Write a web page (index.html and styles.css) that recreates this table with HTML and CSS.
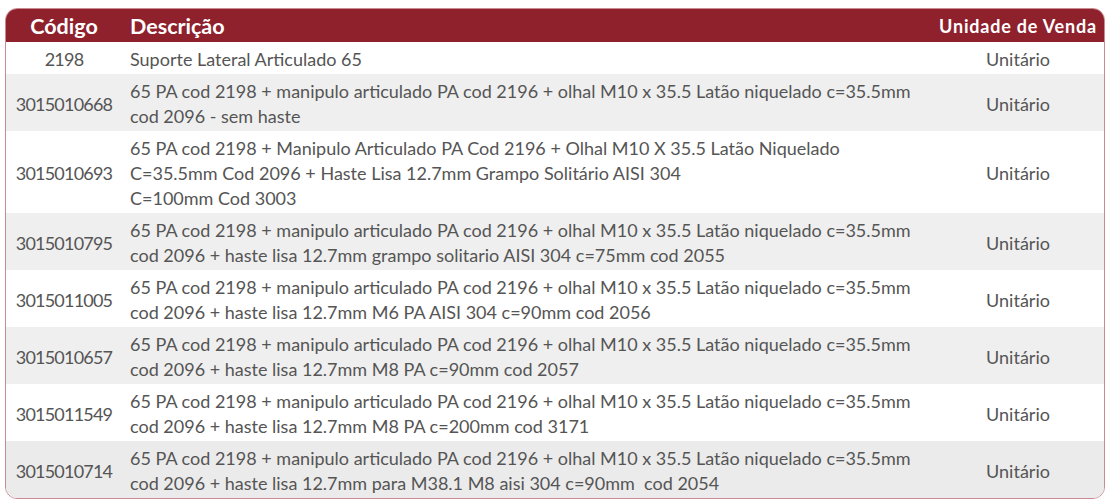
FILE: index.html
```html
<!DOCTYPE html>
<html lang="pt-BR">
<head>
<meta charset="utf-8">
<title>Tabela de produtos</title>
<link rel="stylesheet" href="styles.css">
</head>
<body>
<div class="wrap">
<table class="prod">
<thead>
<tr><th class="c-cod">Código</th><th class="c-desc">Descrição</th><th class="c-un">Unidade de Venda</th></tr>
</thead>
<tbody>
<tr class="r1"><td class="c-cod">2198</td><td class="c-desc">Suporte Lateral Articulado 65</td><td class="c-un">Unitário</td></tr>
<tr class="r2"><td class="c-cod">3015010668</td><td class="c-desc">65 PA cod 2198 + manipulo articulado PA cod 2196 + olhal M10 x 35.5 Latão niquelado c=35.5mm<br>cod 2096 - sem haste</td><td class="c-un">Unitário</td></tr>
<tr class="r3"><td class="c-cod">3015010693</td><td class="c-desc">65 PA cod 2198 + Manipulo Articulado PA Cod 2196 + Olhal M10 X 35.5 Latão Niquelado<br>C=35.5mm Cod 2096 + Haste Lisa 12.7mm Grampo Solitário AISI 304<br>C=100mm Cod 3003</td><td class="c-un">Unitário</td></tr>
<tr class="r2"><td class="c-cod">3015010795</td><td class="c-desc">65 PA cod 2198 + manipulo articulado PA cod 2196 + olhal M10 x 35.5 Latão niquelado c=35.5mm<br>cod 2096 + haste lisa 12.7mm grampo solitario AISI 304 c=75mm cod 2055</td><td class="c-un">Unitário</td></tr>
<tr class="r1"><td class="c-cod">3015011005</td><td class="c-desc">65 PA cod 2198 + manipulo articulado PA cod 2196 + olhal M10 x 35.5 Latão niquelado c=35.5mm<br>cod 2096 + haste lisa 12.7mm M6 PA AISI 304 c=90mm cod 2056</td><td class="c-un">Unitário</td></tr>
<tr class="r2"><td class="c-cod">3015010657</td><td class="c-desc">65 PA cod 2198 + manipulo articulado PA cod 2196 + olhal M10 x 35.5 Latão niquelado c=35.5mm<br>cod 2096 + haste lisa 12.7mm M8 PA c=90mm cod 2057</td><td class="c-un">Unitário</td></tr>
<tr class="r1"><td class="c-cod">3015011549</td><td class="c-desc">65 PA cod 2198 + manipulo articulado PA cod 2196 + olhal M10 x 35.5 Latão niquelado c=35.5mm<br>cod 2096 + haste lisa 12.7mm M8 PA c=200mm cod 3171</td><td class="c-un">Unitário</td></tr>
<tr class="r2 last"><td class="c-cod">3015010714</td><td class="c-desc">65 PA cod 2198 + manipulo articulado PA cod 2196 + olhal M10 x 35.5 Latão niquelado c=35.5mm<br>cod 2096 + haste lisa 12.7mm para M38.1 M8 aisi 304 c=90mm&nbsp; cod 2054</td><td class="c-un">Unitário</td></tr>
</tbody>
</table>
</div>
</body>
</html>
```

FILE: styles.css
```css
html, body {
  margin: 0;
  padding: 0;
  background: #ffffff;
}
.wrap {
  padding: 8px 5px 0 5px;
}
.prod {
  width: 100%;
  table-layout: fixed;
  border-collapse: separate;
  border-spacing: 0;
  border: 1px solid #c98b91;
  border-radius: 12px;
  overflow: hidden;
  font-family: Lato, "Open Sans", sans-serif;
  font-size: 18px;
  color: #555555;
}
.prod thead th {
  background: #8e212c;
  color: #ffffff;
  font-weight: 700;
  font-size: 21.5px;
  height: 33px;
  padding: 0;
  line-height: 24px;
  white-space: nowrap;
}
.prod thead th.c-un {
  font-size: 18px;
  letter-spacing: 0.8px;
}
.prod td {
  padding: 5px 0 2px 0;
  line-height: 25px;
  vertical-align: middle;
  white-space: nowrap;
}
.prod .c-cod {
  width: 116px;
  text-align: center;
  padding-left: 0;
  padding-right: 0;
}
.prod td.c-cod {
  letter-spacing: -0.8px;
}
.prod .c-desc {
  text-align: left;
  padding-left: 8px;
}
.prod .c-un {
  width: 172px;
  text-align: center;
}
.r1 td { background: #ffffff; }
.r2 td { background: #efefef; }
.r3 td { background: #ffffff; }
.last td { background: #ebebeb; }
```
